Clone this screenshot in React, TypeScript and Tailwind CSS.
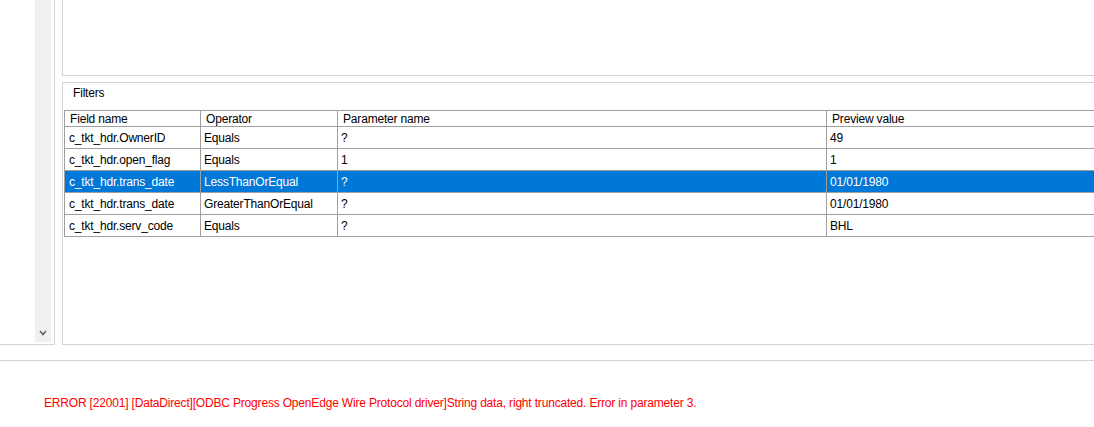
import React from "react";

const filters = [
  { field: "c_tkt_hdr.OwnerID", op: "Equals", param: "?", preview: "49" },
  { field: "c_tkt_hdr.open_flag", op: "Equals", param: "1", preview: "1" },
  { field: "c_tkt_hdr.trans_date", op: "LessThanOrEqual", param: "?", preview: "01/01/1980", selected: true },
  { field: "c_tkt_hdr.trans_date", op: "GreaterThanOrEqual", param: "?", preview: "01/01/1980" },
  { field: "c_tkt_hdr.serv_code", op: "Equals", param: "?", preview: "BHL" },
];

const App = () => {
  return (
    <div className="w-[1094px] h-[427px] overflow-hidden bg-white text-black text-[12px] tracking-[-0.18px] font-['Segoe_UI','Liberation_Sans',Arial,sans-serif]">
      <div className="flex h-[345px]">
        {/* left list with scrollbar */}
        <div className="w-[55px] shrink-0 flex border-r border-b border-[#d4d4d4]">
          <div className="flex-1" />
          <div className="w-[16px] mr-[3px] mb-[2px] bg-[#f0f0f0] flex flex-col justify-end items-center pb-[6px]">
            <svg width="8" height="6" viewBox="0 0 8 6">
              <path d="M1 1 L4 4.5 L7 1" fill="none" stroke="#606060" strokeWidth="1.6" />
            </svg>
          </div>
        </div>

        <div className="ml-[7px] flex-1 flex flex-col min-w-0">
          <div className="h-[76px] shrink-0 border-l border-b border-[#d4d4d4]" />
          <div className="mt-[6px] flex-1 flex flex-col border-l border-t border-b border-[#d4d4d4]">
            <div className="h-[27px] shrink-0 pl-[10px] pt-[2px] leading-[16px]">Filters</div>
            <div className="ml-[1px] border-l border-t border-[#a0a0a0]">
              <div className="flex h-[16px] leading-[16px]">
                <div className="w-[136px] shrink-0 pl-[5px] border-r border-b border-[#a0a0a0]">Field name</div>
                <div className="w-[137px] shrink-0 pl-[5px] border-r border-b border-[#a0a0a0]">Operator</div>
                <div className="w-[489px] shrink-0 pl-[5px] border-r border-b border-[#a0a0a0]">Parameter name</div>
                <div className="flex-1 pl-[5px] border-b border-[#a0a0a0]">Preview value</div>
              </div>
              {filters.map((f, i) => (
                <div
                  key={i}
                  className={
                    f.selected
                      ? "flex h-[22px] leading-[23px] bg-[#0078d7] text-white"
                      : "flex h-[22px] leading-[23px]"
                  }
                >
                  <div className="w-[136px] shrink-0 pl-[4px] border-r border-b border-[#a0a0a0]">{f.field}</div>
                  <div className="w-[137px] shrink-0 pl-[3px] border-r border-b border-[#a0a0a0]">{f.op}</div>
                  <div className="w-[489px] shrink-0 pl-[3px] border-r border-b border-[#a0a0a0]">{f.param}</div>
                  <div className="flex-1 pl-[3px] border-b border-[#a0a0a0]">{f.preview}</div>
                </div>
              ))}
            </div>
          </div>
        </div>
      </div>

      <div className="mt-[15px] border-t border-[#d4d4d4] pt-[34px] pl-[44px] text-[#ff0000] leading-[16px]">
        ERROR [22001] [DataDirect][ODBC Progress OpenEdge Wire Protocol driver]String data, right truncated. Error in parameter 3.
      </div>
    </div>
  );
};

export default App;
